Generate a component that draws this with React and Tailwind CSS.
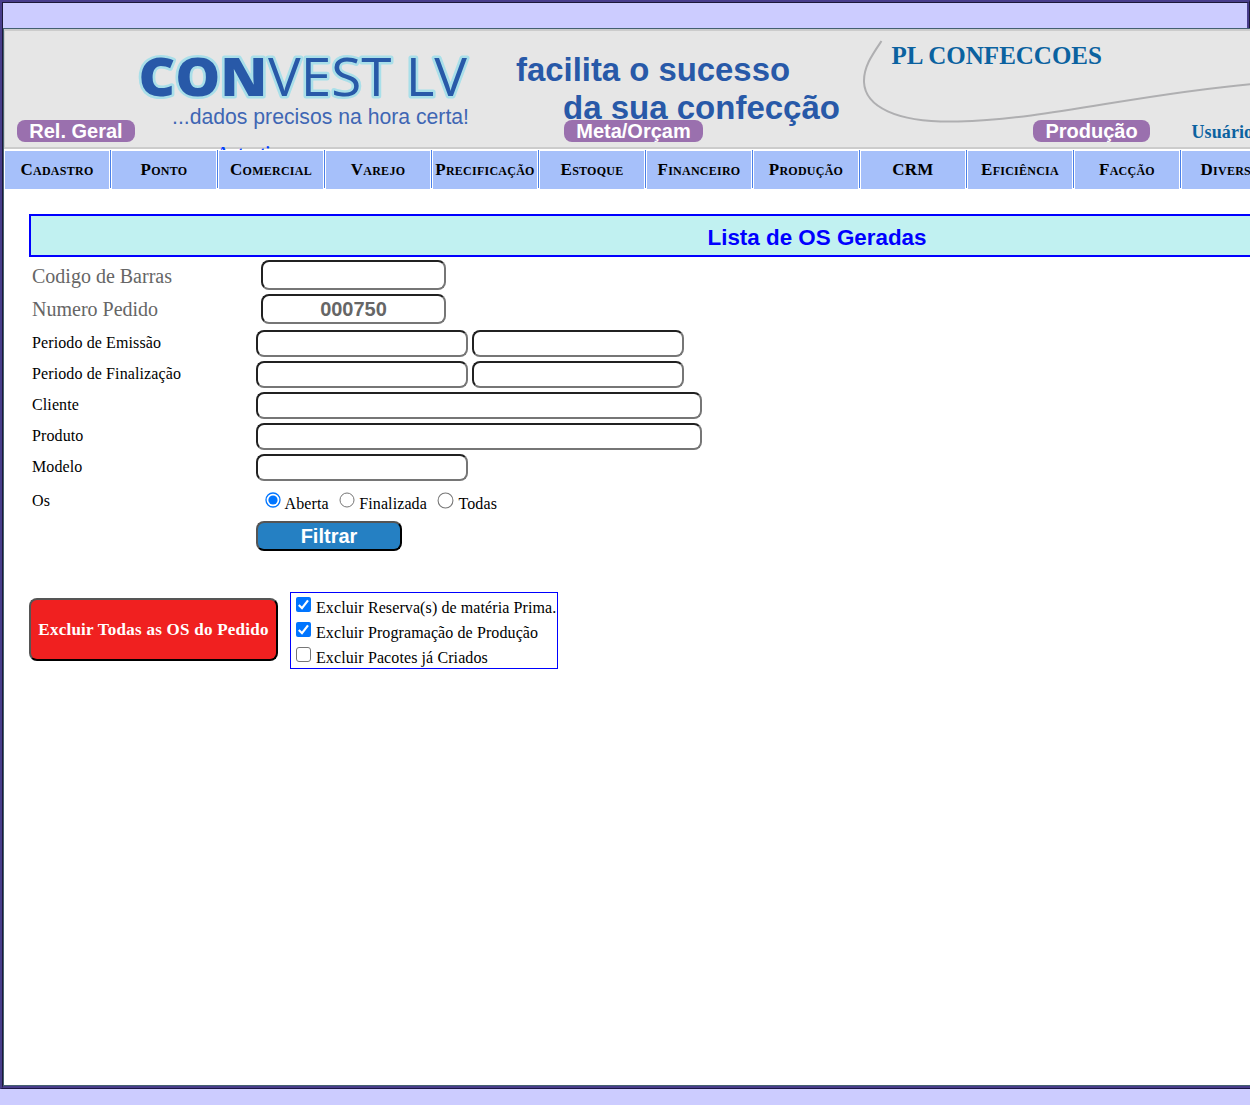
import React from "react";

const menu = ["Cadastro", "Ponto", "Comercial", "Varejo", "Precificação", "Estoque", "Financeiro", "Produção", "CRM", "Eficiência", "Facção", "Diversos"];

const field = "block rounded-[8px] border-2 border-t-[#212121] border-l-[#212121] border-r-[#767676] border-b-[#767676] bg-white outline-none";

function Input({ className, ...rest }) {
  return <input className={`${field} ${className}`} {...rest} />;
}

function Row({ label, h = "h-[31px]", children }) {
  return (
    <div className={`flex items-center ${h}`}>
      <div className="w-[224px] pb-[3px] text-[16px] leading-[17px] tracking-[0.11px]">{label}</div>
      <div className="flex gap-1">{children}</div>
    </div>
  );
}

function Radio({ label, checked, big, className }) {
  return (
    <label className={`flex items-start ${className}`}>
      <svg className={big ? "size-[17px]" : "size-[16px]"} viewBox="0 0 16 16" fill="none">
        <circle cx="8" cy="8" r="7" stroke={checked ? "#0075ff" : "#767676"} strokeWidth={checked ? 1.3 : 1} />
        {checked && <circle cx="8" cy="8" r="4.6" fill="#0075ff" />}
      </svg>
      <span className="ml-[4px] mt-[3px] text-[16px] leading-[18px] tracking-[0.11px]">{label}</span>
    </label>
  );
}

function Check({ label, checked }) {
  return (
    <label className="flex h-[25px] items-start pl-[5px] pt-[4px]">
      <svg className="h-[15px] w-[15px]" viewBox="0 0 15 15" fill="none">
        {checked ? (
          <>
            <rect width="15" height="15" rx="2" fill="#0075ff" />
            <path d="M2.800 8l3.200 3.200L12 3.400" stroke="#fff" strokeWidth="2.200" />
          </>
        ) : (
          <rect x=".5" y=".5" width="14" height="14" rx="2.5" stroke="#767676" fill="#fff" />
        )}
      </svg>
      <span className="ml-[5px] mt-[2px] whitespace-nowrap text-[16px] leading-[17px] tracking-[0.1px]">{label}</span>
    </label>
  );
}

function Pill({ className, children }) {
  return (
    <div className={`absolute top-[91px] flex h-[22px] items-center justify-center rounded-[8px] bg-[#9a70ae] font-['Liberation_Sans',sans-serif] text-[20px] font-bold leading-[22px] text-white ${className}`}>
      {children}
    </div>
  );
}

function Banner() {
  return (
    <div className="relative h-[121px] w-[1246px] overflow-hidden bg-white">
      <svg className="block" width="1246" height="121" viewBox="4 29 1246 121">
        <rect x="4" y="29" width="1246" height="120" fill="#ccc" />
        <rect x="5" y="31" width="1245" height="116" fill="#e6e6e6" />
        <g fill="#2859a8" stroke="#a9dfe9" strokeWidth="5" strokeLinejoin="round" paintOrder="stroke" fontFamily="Open Sans">
          <text x="138.5" y="95.500" fontWeight="800" fontSize="53" textLength="129" lengthAdjust="spacingAndGlyphs">CON</text>
          <text x="268" y="95.5" fontWeight="500" fontSize="53" textLength="199" lengthAdjust="spacingAndGlyphs">VEST LV</text>
        </g>
        <g fontFamily="Liberation Sans" fill="#2859a8">
          <text x="172" y="123.5" fontSize="21.500" fill="#3f66b4" textLength="297" lengthAdjust="spacingAndGlyphs">...dados precisos na hora certa!</text>
          <text x="516" y="80.5" fontSize="33" fontWeight="700" textLength="274" lengthAdjust="spacingAndGlyphs">facilita o sucesso</text>
          <text x="563" y="118.500" fontSize="33" fontWeight="700" textLength="277" lengthAdjust="spacingAndGlyphs">da sua confecção</text>
        </g>
        <path d="M881.5 41C872 55 863.500 67 864 82C865 106 895 123 958 121.500C1050 119 1130 95 1252 84" fill="none" stroke="#afafb1" strokeWidth="2" />
      </svg>
      <div className="absolute left-[887.5px] top-[12px] whitespace-nowrap text-[25px] font-bold leading-[30px] text-[#0b62a0]">PL CONFECCOES</div>
      <div className="absolute left-[1187.5px] top-[93px] whitespace-nowrap text-[18px] font-bold leading-[21px] tracking-[0.1px] text-[#0b62a0]">Usuário:</div>
      <div className="absolute left-[213px] top-[115px] whitespace-nowrap text-[16.5px] font-bold leading-[17px] text-[#0040ff]">Autentica</div>
      <Pill className="left-[13px] w-[118px]">Rel. Geral</Pill>
      <Pill className="left-[560px] w-[139px]">Meta/Orçam</Pill>
      <Pill className="left-[1029px] w-[117px]">Produção</Pill>
    </div>
  );
}

export default function App() {
  return (
    <div className="flex h-[1105px] w-[1250px] flex-col overflow-hidden bg-[#ccccff] font-['Liberation_Serif',serif] text-black">
      <div className="h-[28px] w-full shrink-0 border-2 border-b-0 border-r border-[#483d8b] border-r-[#1c1838]">
        <div className="h-full w-full border border-b-0 border-r-2 border-[#1c1838] border-r-[#483d8b]" />
      </div>
      <div className="flex h-[1061px] shrink-0 border-b border-l-2 border-b-[#1b1546] border-l-[#483d8b]">
        <div className="flex grow flex-col border-b-2 border-l border-b-[#483d8b] border-l-[#1c1838]">
          <div className="flex grow flex-col overflow-hidden border-b border-l border-t border-[#44606f] bg-white">
            <Banner />
            <nav className="flex h-[39px] shrink-0 pl-px">
              {menu.map((m) => (
                <div key={m} className="flex shrink-0">
                  <div className="mt-px flex h-[38px] w-[104px] items-center justify-center whitespace-nowrap bg-[#a6c0fa] pb-[1px] text-[17px] font-bold leading-none tracking-[0.25px] [font-variant:small-caps]">{m}</div>
                  <div className="mr-px ml-px h-[38px] w-px bg-[#4a80e8]" />
                </div>
              ))}
            </nav>
            <main className="ml-[25px] mt-[25px] w-[1576px]">
              <h1 className="flex h-[43px] items-center justify-center border-2 border-[#0000ff] bg-[#c1f1f1] pt-[6px] font-['Liberation_Sans',sans-serif] text-[22.4px] font-bold leading-none text-[#0000ff]">Lista de OS Geradas</h1>
              <div className="pl-[3px]">
                <div className="flex h-[36px] items-center text-[20px] text-[#666]">
                  <div className="w-[229px] pt-px">Codigo de Barras</div>
                  <Input className="h-[30px] w-[185px]" />
                </div>
                <div className="mt-px flex h-[30px] items-center text-[20px] text-[#666]">
                  <div className="w-[229px]">Numero Pedido</div>
                  <Input defaultValue="000750" className="h-[30px] w-[185px] text-center font-['Liberation_Sans',sans-serif] text-[20px] font-bold text-[#666]" />
                </div>
                <div className="pt-[4px]">
                  <Row label="Periodo de Emissão"><Input className="h-[27px] w-[212px]" /><Input className="h-[27px] w-[212px]" /></Row>
                  <Row label="Periodo de Finalização"><Input className="h-[27px] w-[212px]" /><Input className="h-[27px] w-[212px]" /></Row>
                  <Row label="Cliente"><Input className="h-[27px] w-[446px]" /></Row>
                  <Row label="Produto"><Input className="h-[27px] w-[446px]" /></Row>
                  <Row label="Modelo"><Input className="h-[27px] w-[212px]" /></Row>
                </div>
                <Row label="Os" h="h-[38px]">
                  <div className="flex pl-[8.5px]">
                    <Radio label="Aberta" checked />
                    <Radio label="Finalizada" className="ml-[10.5px]" />
                    <Radio label="Todas" big className="ml-[10.5px]" />
                  </div>
                </Row>
                <button className="ml-[224px] block h-[30px] w-[146px] rounded-[8px] border-2 border-b-black border-l-[#555] border-r-black border-t-[#555] bg-[#2580c3] font-['Liberation_Sans',sans-serif] text-[20px] font-bold leading-[26px] text-white">Filtrar</button>
              </div>
              <div className="mt-[41px] flex items-start">
                <button className="mt-[6px] h-[63px] w-[249px] whitespace-nowrap rounded-[8px] border-2 border-b-black border-l-[#555] border-r-black border-t-[#555] bg-[#f02020] text-[17px] font-bold tracking-[0.25px] text-white">Excluir Todas as OS do Pedido</button>
                <div className="ml-[12px] h-[77px] w-[268px] border border-[#0000ff]">
                  <Check label="Excluir Reserva(s) de matéria Prima." checked />
                  <Check label="Excluir Programação de Produção" checked />
                  <Check label="Excluir Pacotes já Criados" />
                </div>
              </div>
            </main>
          </div>
        </div>
      </div>
    </div>
  );
}
